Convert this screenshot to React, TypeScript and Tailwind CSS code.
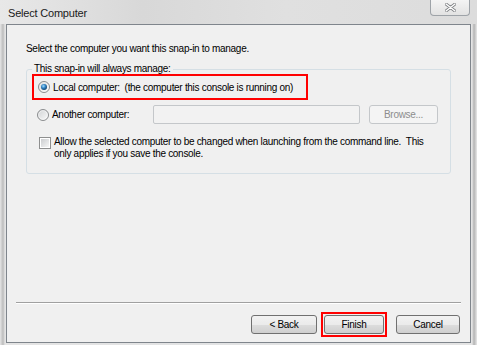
function Radio({ checked }: { checked?: boolean }) {
  return (
    <svg width="12" height="12" viewBox="0 0 12 12" className="shrink-0">
      <defs>
        <linearGradient id={checked ? 'rf1' : 'rf0'} x1="0" y1="0" x2="1" y2="1">
          <stop offset="0" stopColor="#cfd1d3" />
          <stop offset="1" stopColor="#fbfbfb" />
        </linearGradient>
        <radialGradient id="dot" cx="0.4" cy="0.35" r="0.7">
          <stop offset="0" stopColor="#9fdcff" />
          <stop offset="0.5" stopColor="#2d7fc0" />
          <stop offset="1" stopColor="#0e3d66" />
        </radialGradient>
      </defs>
      <circle cx="6" cy="6" r="5.5" fill={`url(#${checked ? 'rf1' : 'rf0'})`} stroke="#8a8c8e" strokeWidth="1" />
      <circle cx="6" cy="6" r="4.3" fill="none" stroke="#ffffff" strokeOpacity="0.6" strokeWidth="0.8" />
      {checked && <circle cx="6" cy="6" r="3" fill="url(#dot)" />}
    </svg>
  );
}

function Checkbox() {
  return (
    <span className="shrink-0 w-[12px] h-[12px] border border-[#8e8f8f] bg-white p-[1px] block">
      <span className="block w-full h-full bg-gradient-to-br from-[#cbcdcf] to-[#f6f6f6]" />
    </span>
  );
}

function WinButton({ children, disabled }: { children: string; disabled?: boolean }) {
  return (
    <button
      className={`w-full h-[19px] rounded-[3px] border text-[10px] tracking-[-0.3px] flex items-center justify-center ${
        disabled
          ? 'border-[#c4c7ca] bg-[#f4f4f4] text-[#8d8d8d]'
          : 'border-[#707070] text-black bg-[linear-gradient(#f2f2f2_0%,#ebebeb_50%,#dddddd_51%,#cfcfcf_100%)]'
      }`}
    >
      {children}
    </button>
  );
}

export default function App() {
  return (
    <div className="w-[477px] h-[345px] overflow-hidden flex flex-col font-['Liberation_Sans',Arial,sans-serif] bg-[linear-gradient(90deg,#e6e6e6_0px,#bcbcbc_3px,#e4e4e4_5px,#e2e3e4_50%,#e4e4e4_472px,#b4b4b4_474px,#e8e8e8_477px)]">
      {/* title bar */}
      <div className="h-[24px] shrink-0 flex items-start bg-[linear-gradient(90deg,#e8e8e8,#d8d8d8_30%,#e0e0e0_60%,#dcdcdc)]">
        <span className="pl-[8px] pt-[5px] text-[11px] tracking-[-0.2px] text-[#1a1a1a]">Select Computer</span>
        <div className="ml-auto mr-[7px] w-[40px] h-[16px] rounded-b-[4px] border border-t-0 border-[#9ea3a8] bg-[linear-gradient(#f4f4f4,#e2e2e2)] flex items-center justify-center">
          <svg width="11" height="9" viewBox="0 0 11 9">
            <path d="M1 1 L10 8 M10 1 L1 8" stroke="#7d7f82" strokeWidth="3" strokeLinecap="round" />
            <path d="M1 1 L10 8 M10 1 L1 8" stroke="#ffffff" strokeWidth="1.4" strokeLinecap="round" />
          </svg>
        </div>
      </div>

      {/* client area */}
      <div className="ml-[6px] mr-[6px] mb-[2px] flex-1 border border-[#7f858c] bg-[#f0f0f0] flex flex-col">
        <p className="mt-[18px] ml-[19px] text-[10px] leading-[12px] tracking-[-0.3px] text-black">
          Select the computer you want this snap-in to manage.
        </p>

        <fieldset className="mt-[8px] ml-[19px] w-[425px] h-[111px] border border-[#d5dfe5] rounded-[3px] flex flex-col">
          <legend className="ml-[5px] px-[2px] text-[10px] leading-[12px] tracking-[-0.3px] text-black">
            This snap-in will always manage:
          </legend>

          <div className="mt-[-1px] ml-[5px] w-[276px] h-[26px] border-[2px] border-[#ff0000] flex items-center gap-[3px] pl-[4px]">
            <Radio checked />
            <span className="text-[10px] tracking-[-0.3px] text-black whitespace-pre">
              Local computer:  (the computer this console is running on)
            </span>
          </div>

          <div className="mt-[5px] ml-[10px] flex items-center h-[19px]">
            <Radio />
            <span className="ml-[3px] w-[101px] shrink-0 whitespace-nowrap text-[10px] tracking-[-0.3px] text-black">
              Another computer:
            </span>
            <div className="shrink-0 w-[207px] h-[19px] border border-[#c4c7ca] rounded-[2px] bg-[#f2f2f2]" />
            <div className="shrink-0 ml-[9px] w-[69px]">
              <WinButton disabled>Browse...</WinButton>
            </div>
          </div>

          <div className="mt-[13px] ml-[12px] flex items-start gap-[3px]">
            <Checkbox />
            <span className="text-[10px] leading-[12px] tracking-[-0.3px] text-black mt-[-1px]">
              Allow the selected computer to be changed when launching from the command line.&nbsp; This
              <br />
              only applies if you save the console.
            </span>
          </div>
        </fieldset>

        <div className="flex-1" />

        {/* separator */}
        <div className="mx-[9px] h-[2px] border-t border-[#a0a0a0] border-b border-b-white" />

        <div className="mt-[8px] mb-[5px] mr-[10px] flex items-center justify-end">
          <div className="w-[66px]">
            <WinButton>{'< Back'}</WinButton>
          </div>
          <div className="ml-[4px] border-[2px] border-[#ff0000] p-[1px]">
            <div className="w-[60px]">
              <WinButton>Finish</WinButton>
            </div>
          </div>
          <div className="ml-[9px] w-[64px]">
            <WinButton>Cancel</WinButton>
          </div>
        </div>
      </div>
    </div>
  );
}
